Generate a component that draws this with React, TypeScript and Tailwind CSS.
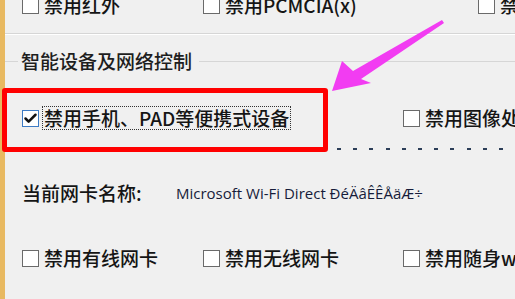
import { Check } from "lucide-react"

const cjk = "font-['Noto_Sans_CJK_SC',sans-serif]"

function Box({ checked = false }: { checked?: boolean }) {
  return (
    <span
      className={`flex h-[17px] w-[17px] shrink-0 items-center justify-center border-[1.5px] ${
        checked ? "border-[#3d7bc4] bg-white" : "border-[#6a6a6a] bg-white"
      }`}
    >
      {checked && <Check className="h-[15px] w-[15px] text-[#111]" strokeWidth={4} />}
    </span>
  )
}

function Item({ label, width, checked, focused }: { label: string; width?: string; checked?: boolean; focused?: boolean }) {
  return (
    <div className={`flex shrink-0 items-center gap-[5px] ${width ?? ""}`}>
      <Box checked={checked} />
      <span
        className={`whitespace-nowrap text-[19px] font-medium leading-[22px] text-[#151515] ${
          focused ? "-ml-[2px] border border-dotted border-[#333] px-[1px]" : ""
        }`}
      >
        {label}
      </span>
    </div>
  )
}

export default function App() {
  return (
    <div className={`relative flex h-[299px] w-[515px] overflow-hidden bg-[#f0f0f0] ${cjk}`}>
      <div className="w-[5px] shrink-0 bg-[#e8b961]" />

      <div className="flex min-w-0 flex-1 flex-col">
        {/* top row is scrolled partly out of view */}
        <div className="-mt-[5px] flex h-[20px] items-center pl-[17px]">
          <Item label="禁用红外" width="w-[181px]" />
          <Item label="禁用PCMCIA(x)" width="w-[275px]" />
          <Item label="禁用蓝牙" />
        </div>

        <div className="mt-[18px] h-px bg-[#d6d6d6]" />
        <div className="h-px bg-white" />

        <div className="mt-[14px] flex h-[24px] items-center">
          <div className="h-px w-[13px] bg-[#d6d6d6]" />
          <span className="mx-[3px] whitespace-nowrap text-[19px] font-medium text-[#1e1e1e]">智能设备及网络控制</span>
          <div className="ml-[4px] h-px flex-1 bg-[#d6d6d6]" />
        </div>

        <div className="mt-[31px] flex h-[28px] items-center pl-[17px]">
          <Item label="禁用手机、PAD等便携式设备" width="w-[381px]" checked focused />
          <Item label="禁用图像处理" />
        </div>

        <div className="mt-[16px] h-[2px] bg-[repeating-linear-gradient(90deg,transparent_0_8px,#2c3e58_8px_12px,transparent_12px_16.2px)]" />

        <div className="mt-[31px] flex h-[24px] items-center pl-[17px]">
          <span className="w-[154px] shrink-0 whitespace-nowrap text-[19px] font-medium text-[#151515]">当前网卡名称:</span>
          <span className="whitespace-nowrap font-['Open_Sans',sans-serif] text-[15px] text-[#161c3a]">
            Microsoft Wi-Fi Direct ÐéÄâÊÊÅäÆ÷
          </span>
        </div>

        <div className="mt-[41px] flex h-[24px] items-center pl-[17px]">
          <Item label="禁用有线网卡" width="w-[181px]" />
          <Item label="禁用无线网卡" width="w-[200px]" />
          <Item label="禁用随身wifi" />
        </div>
      </div>

      {/* annotation overlay */}
      <div className="absolute left-[2px] top-[88px] h-[64px] w-[326px] rounded-[3px] border-[5px] border-[#ff0000]" />
      <svg className="absolute left-0 top-0" width="515" height="299" viewBox="0 0 515 299">
        <polygon
          points="332,91 342,61 353,71 442,20 444,23 361,79 371,83"
          fill="#f23cf2"
        />
      </svg>
    </div>
  )
}
